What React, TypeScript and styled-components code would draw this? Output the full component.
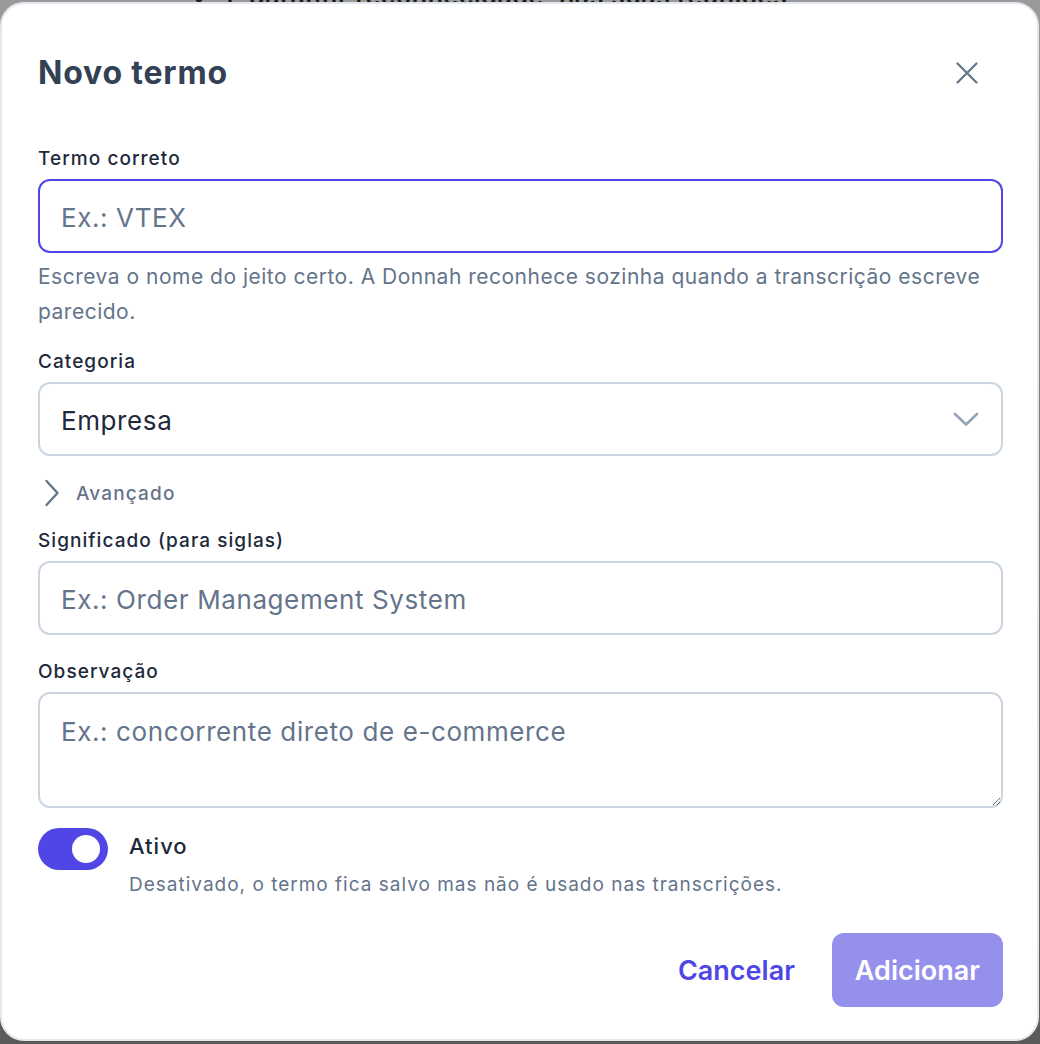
import React from 'react';
import styled, { createGlobalStyle } from 'styled-components';

const GlobalStyle = createGlobalStyle`
  * { box-sizing: border-box; }
  html, body { margin: 0; padding: 0; }
  body {
    font-family: Inter, "Noto Sans", "Liberation Sans", sans-serif;
    background: #7a7a7a;
  }
`;

const Backdrop = styled.div`
  position: relative;
  width: 1040px;
  height: 1044px;
  padding-top: 2px;
  overflow: hidden;
  background: linear-gradient(180deg, #9a9a9a 0%, #6e6e6e 60%, #5a5a5a 100%);
`;

const BehindText = styled.div`
  position: absolute;
  top: -19px;
  left: 190px;
  font-size: 25px;
  font-weight: 600;
  color: #1a1a1a;
  white-space: nowrap;
  letter-spacing: 0.6px;
`;

const Modal = styled.div`
  position: relative;
  width: 1039px;
  height: 1039px;
  background: #fff;
  border: 2px solid #e2e8f0;
  border-radius: 24px;
  padding: 50px 34px 0 36px;
  display: flex;
  flex-direction: column;
`;

const Header = styled.div`
  display: flex;
  align-items: center;
  justify-content: space-between;
  height: 38px;
`;

const Title = styled.h2`
  margin: 0;
  font-size: 32px;
  font-weight: 700;
  line-height: 38px;
  color: #334155;
  letter-spacing: 0.8px;
`;

const CloseButton = styled.button`
  border: 0;
  background: none;
  padding: 0;
  margin-right: 25px;
  width: 22px;
  height: 22px;
  display: flex;
  cursor: pointer;
`;

const Form = styled.div`
  display: flex;
  flex-direction: column;
  margin-top: 55px;
`;

const Field = styled.div<{ $gap?: number }>`
  display: flex;
  flex-direction: column;
  margin-top: ${({ $gap }) => $gap ?? 0}px;
`;

const Label = styled.label`
  font-size: 19px;
  line-height: 24px;
  font-weight: 500;
  color: #1e293b;
  letter-spacing: 1.05px;
  margin-bottom: 8px;
`;

const Input = styled.input<{ $focused?: boolean }>`
  height: 74px;
  width: 100%;
  border: 2px solid ${({ $focused }) => ($focused ? '#4f46e5' : '#cbd5e1')};
  border-radius: 12px;
  padding: 3px 21px 0;
  font-family: inherit;
  font-size: 26px;
  color: #1e293b;
  outline: none;
  background: #fff;
  letter-spacing: 0.6px;

  &::placeholder {
    color: #64748b;
  }
`;

const TextArea = styled.textarea`
  height: 116px;
  width: 100%;
  border: 2px solid #cbd5e1;
  border-radius: 12px;
  padding: 22px 21px;
  font-family: inherit;
  font-size: 26px;
  line-height: 32px;
  color: #1e293b;
  outline: none;
  resize: vertical;
  letter-spacing: 0.6px;

  &::placeholder {
    color: #64748b;
  }
`;

const Hint = styled.p`
  margin: 6px 0 0;
  font-size: 21px;
  line-height: 35px;
  color: #64748b;
  letter-spacing: 0.5px;
`;

const Select = styled.div`
  height: 74px;
  border: 2px solid #cbd5e1;
  border-radius: 12px;
  padding: 3px 22px 0 21px;
  display: flex;
  align-items: center;
  justify-content: space-between;
  font-size: 26px;
  color: #1e293b;
  letter-spacing: 0.6px;

  svg {
    margin-top: -3px;
  }
`;

const Disclosure = styled.button`
  margin-top: 21px;
  align-self: flex-start;
  display: flex;
  align-items: center;
  gap: 16px;
  border: 0;
  background: none;
  padding: 0 0 0 6px;
  font-family: inherit;
  font-size: 19px;
  font-weight: 500;
  color: #64748b;
  letter-spacing: 1.15px;
  height: 32px;
`;

const ToggleRow = styled.div`
  margin-top: 20px;
  display: flex;
  gap: 21px;
`;

const Switch = styled.div<{ $on: boolean }>`
  position: relative;
  width: 70px;
  height: 42px;
  border-radius: 21px;
  background: ${({ $on }) => ($on ? '#4f46e5' : '#cbd5e1')};
  flex-shrink: 0;

  &::after {
    content: '';
    position: absolute;
    top: 7px;
    left: ${({ $on }) => ($on ? '34px' : '8px')};
    width: 28px;
    height: 28px;
    border-radius: 50%;
    background: #fff;
  }
`;

const ToggleText = styled.div`
  display: flex;
  flex-direction: column;
  padding-top: 4px;
`;

const ToggleTitle = styled.span`
  font-size: 22px;
  line-height: 28px;
  font-weight: 500;
  color: #1e293b;
  letter-spacing: 1px;
`;

const ToggleDesc = styled.span`
  margin-top: 13px;
  font-size: 19px;
  line-height: 24px;
  color: #64748b;
  letter-spacing: 1px;
`;

const Footer = styled.div`
  margin-top: 36px;
  display: flex;
  justify-content: flex-end;
  align-items: center;
  gap: 37px;
`;

const TextButton = styled.button`
  border: 0;
  background: none;
  padding: 0;
  font-family: inherit;
  font-size: 27px;
  font-weight: 600;
  color: #4f46e5;
  cursor: pointer;
`;

const PrimaryButton = styled.button`
  height: 74px;
  padding: 0 23px;
  border: 0;
  border-radius: 12px;
  background: #9690ed;
  color: #fff;
  font-family: inherit;
  font-size: 27px;
  font-weight: 600;
  cursor: not-allowed;
`;

export default function App() {
  return (
    <>
      <GlobalStyle />
      <Backdrop>
        <BehindText>✓ &nbsp;E garantir reconhecidade, nas suas reuniões</BehindText>
        <Modal>
          <Header>
            <Title>Novo termo</Title>
            <CloseButton aria-label="Fechar">
              <svg width="22" height="22" viewBox="0 0 22 22" fill="none">
                <path d="M1.5 1.5L20.5 20.5M20.5 1.5L1.5 20.5" stroke="#64748b" strokeWidth="2.2" strokeLinecap="round" />
              </svg>
            </CloseButton>
          </Header>

          <Form>
            <Field>
              <Label>Termo correto</Label>
              <Input $focused placeholder="Ex.: VTEX" />
              <Hint>
                Escreva o nome do jeito certo. A Donnah reconhece sozinha quando a transcrição escreve parecido.
              </Hint>
            </Field>

            <Field $gap={21}>
              <Label>Categoria</Label>
              <Select>
                <span>Empresa</span>
                <svg width="26" height="15" viewBox="0 0 26 15" fill="none">
                  <path d="M2 2L13 12.5L24 2" stroke="#94a3b8" strokeWidth="2.6" strokeLinecap="round" strokeLinejoin="round" />
                </svg>
              </Select>
            </Field>

            <Disclosure>
              <svg width="16" height="30" viewBox="0 0 16 30" fill="none">
                <path d="M2.5 3L13.5 15L2.5 27" stroke="#64748b" strokeWidth="2.4" strokeLinecap="round" strokeLinejoin="round" />
              </svg>
              Avançado
            </Disclosure>

            <Field $gap={20}>
              <Label>Significado (para siglas)</Label>
              <Input placeholder="Ex.: Order Management System" />
            </Field>

            <Field $gap={25}>
              <Label>Observação</Label>
              <TextArea placeholder="Ex.: concorrente direto de e-commerce" />
            </Field>

            <ToggleRow>
              <Switch $on />
              <ToggleText>
                <ToggleTitle>Ativo</ToggleTitle>
                <ToggleDesc>Desativado, o termo fica salvo mas não é usado nas transcrições.</ToggleDesc>
              </ToggleText>
            </ToggleRow>
          </Form>

          <Footer>
            <TextButton>Cancelar</TextButton>
            <PrimaryButton disabled>Adicionar</PrimaryButton>
          </Footer>
        </Modal>
      </Backdrop>
    </>
  );
}
